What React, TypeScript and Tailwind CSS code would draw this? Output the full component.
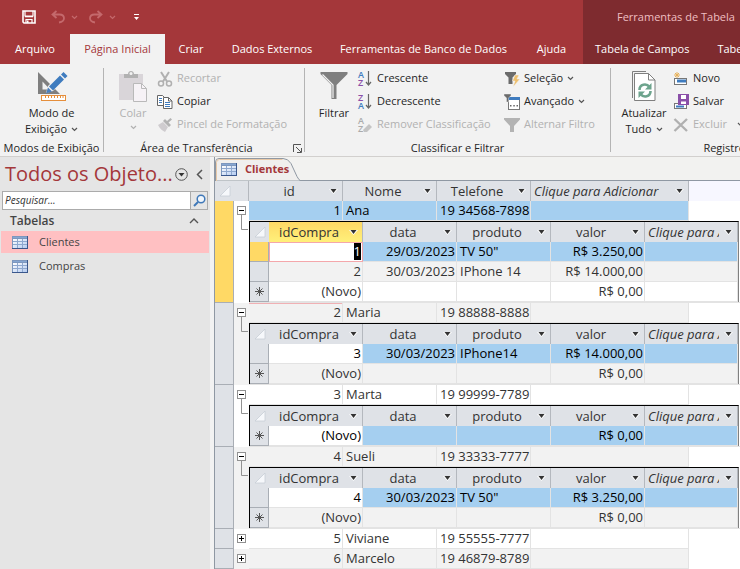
import type { ReactNode } from "react";

const ui = "font-['Open_Sans','Noto_Sans',sans-serif]";

/* ---------- small glyphs ---------- */

function Chevron({ className = "" }: { className?: string }) {
  return (
    <svg width="7" height="5" viewBox="0 0 7 5" className={`inline-block shrink-0 ${className}`} aria-hidden="true">
      <path d="M1 1l2.5 2.5L6 1" fill="none" stroke="currentColor" strokeWidth="1.2" />
    </svg>
  );
}

function SaveIcon() {
  return (
    <svg width="14" height="14" viewBox="0 0 14 14" fill="none" aria-hidden="true">
      <path d="M1 1h12v12H2l-1-1z" stroke="#fff" strokeWidth="1.6" />
      <path d="M3 1v5h8V1M3 6.6h8M4 13V9.5h6V13" stroke="#fff" strokeWidth="1.2" />
      <path d="M5 10.5h1.5V13H5z" fill="#fff" />
    </svg>
  );
}

function UndoIcon({ flip = false }: { flip?: boolean }) {
  return (
    <svg width="14" height="14" viewBox="0 0 14 14" fill="none" aria-hidden="true" className={flip ? "-scale-x-100" : ""}>
      <path d="M5.5 1L1.5 4.5l4 3.5M2 4.5h6.5c3 0 4.5 1.5 4.5 3.800 0 2.500-2 3.700-5 4.200" stroke="#c4696c" strokeWidth="1.8" />
    </svg>
  );
}

function TableIcon() {
  return (
    <svg width="16" height="13" viewBox="0 0 16 13" aria-hidden="true" className="shrink-0">
      <defs>
        <linearGradient id="cells" x1="0" y1="0" x2="1" y2="1">
          <stop offset="0" stopColor="#ffffff" />
          <stop offset="1" stopColor="#b4cbf0" />
        </linearGradient>
      </defs>
      <rect width="16" height="13" fill="#7d97bd" />
      <rect x="1" y="3" width="14" height="9" fill="url(#cells)" />
      <path d="M1 1.500h14" stroke="#86a6d2" />
      <path d="M1 5.500h14M1 8.500h14M5.500 3v9M10.500 3v9" stroke="#8ea8cf" />
      <path d="M0 12.500h16M15.500 0v13" stroke="#3a578c" />
    </svg>
  );
}

function DesignIcon() {
  return (
    <svg width="32" height="32" viewBox="0 0 32 32" aria-hidden="true">
      <path d="M2 2v22h22zM6.500 11.500L14 19.500H6.500z" fill="#7f7f7f" fillRule="evenodd" />
      <path d="M10 23l2-7L25 3l5 5-13 13z" fill="#f2f2f2" />
      <path d="M10 23.500l2-6 4 4z" fill="#4a7fbd" />
      <path d="M13 16.500l4 4L28 9.500l-4-4zM25 4.500l4 4 2.500-2.500-4-4z" fill="#3f7cbf" />
      <rect x="5.500" y="25.500" width="24" height="5" fill="#fff" stroke="#e58e3b" />
      <path d="M9.500 26v2M12.500 26v2M15.500 26v2M18.500 26v2M21.500 26v2M24.500 26v2M27 26v2" stroke="#e58e3b" />
    </svg>
  );
}

function PasteIcon() {
  return (
    <svg width="30" height="32" viewBox="0 0 30 32" aria-hidden="true">
      <path d="M1 4h24v26H1z" fill="#d9d5d9" />
      <path d="M6 4h4c0-4 6-4 6 0h4v4H6z" fill="#b1b1b1" />
      <circle cx="13" cy="3.500" r="1.500" fill="#f2f2f2" />
      <path d="M15.500 13.500h8l5 5v13h-13z" fill="#f6f2f6" stroke="#b9b9b9" />
      <path d="M23.500 13.500v5h5" fill="none" stroke="#b9b9b9" />
    </svg>
  );
}

function CutIcon() {
  return (
    <svg width="16" height="16" viewBox="0 0 16 16" fill="none" aria-hidden="true">
      <path d="M4 1l6 9.500M12 1L6 10.500" stroke="#b0b0b0" strokeWidth="2" />
      <circle cx="4" cy="12.500" r="2.500" stroke="#b0b0b0" strokeWidth="1.500" />
      <circle cx="12" cy="12.500" r="2.500" stroke="#b0b0b0" strokeWidth="1.500" />
    </svg>
  );
}

function CopyIcon() {
  return (
    <svg width="16" height="16" viewBox="0 0 16 16" fill="#fff" aria-hidden="true">
      <path d="M.5 1.500h5l2 2v8h-7z" stroke="#666" />
      <path d="M2 4.500h3M2 6.500h3M2 8.500h3" stroke="#3f7cbf" />
      <path d="M6.500 3.500h5l3.500 3.500v7.500H6.500z" stroke="#666" />
      <path d="M11.500 3.500V7H15" fill="none" stroke="#666" />
      <path d="M8 8.500h5M8 10.500h5M8 12.500h5" stroke="#3f7cbf" />
    </svg>
  );
}

function BrushIcon() {
  return (
    <svg width="16" height="16" viewBox="0 0 16 16" aria-hidden="true">
      <path d="M1 8l5-3 5 5-3 5c-2-1-5-3-7-7z" fill="#cfcccf" />
      <path d="M6 4l6 6 2-2-2.500-2.500L15 2.500 13.500 1 10 4 8 2z" fill="#b3b3b3" />
    </svg>
  );
}

function FunnelIcon() {
  return (
    <svg width="28" height="30" viewBox="0 0 28 30" aria-hidden="true">
      <path d="M.5 1h27v2L16.500 14v14h-5V14L.5 3z" fill="#7f7f7f" />
      <path d="M2.500 3.500L13 14v13" fill="none" stroke="#f2f2f2" strokeWidth="1.200" />
    </svg>
  );
}

function SortIcon({ top, bottom, clear = false }: { top: string; bottom: string; clear?: boolean }) {
  const colour = (letter: string) => (clear ? "#ababab" : letter === "A" ? "#3f7cbf" : "#8a4fa8");
  return (
    <svg width="16" height="18" viewBox="0 0 16 18" aria-hidden="true" fontSize="9" fontWeight="600" fontFamily="Open Sans, sans-serif">
      <text x="1" y="8" fill={colour(top)}>{top}</text>
      <text x="1" y="16" fill={colour(bottom)}>{bottom}</text>
      {clear ? (
        <path d="M6 14l6-6 3 3-5 5H7z" fill="#c4c4c4" />
      ) : (
        <path d="M11.500 1v14M9 12l2.500 3 2.500-3" fill="none" stroke="#666" strokeWidth="1.200" />
      )}
    </svg>
  );
}

function SelectionIcon() {
  return (
    <svg width="16" height="16" viewBox="0 0 16 16" aria-hidden="true">
      <path d="M1 1h11v2L8.500 6.500V13h-4V6.500L1 3z" fill="#6b6b6b" />
      <path d="M11 4h4l-2 4h3l-7 8 2-6H8.500z" fill="#eebf6d" stroke="#f2f2f2" strokeWidth=".5" />
    </svg>
  );
}

function AdvancedIcon() {
  return (
    <svg width="16" height="16" viewBox="0 0 16 16" aria-hidden="true">
      <rect x="4.500" y="4.500" width="11" height="11" fill="#fff" stroke="#777" />
      <path d="M4 3h12v3H4z" fill="#3f7cbf" />
      <path d="M6 11h1.500v1.500H6zM9.300 11h1.500v1.500H9.300zM12.500 11H14v1.500h-1.500z" fill="#666" />
      <path d="M0 0h7v1.500L4.500 4v4h-2V4L0 1.500z" fill="#6b6b6b" stroke="#f2f2f2" strokeWidth=".4" />
    </svg>
  );
}

function ToggleFilterIcon() {
  return (
    <svg width="16" height="16" viewBox="0 0 16 16" aria-hidden="true">
      <path d="M0 1h16v1.500L10 9v6H6V9L0 2.500z" fill="#b3b3b3" />
    </svg>
  );
}

function RefreshIcon() {
  return (
    <svg width="26" height="32" viewBox="0 0 26 32" fill="none" aria-hidden="true">
      <path d="M1.500 28V1.500H15" stroke="#7f7f7f" />
      <path d="M3.500 3.500h14l6.500 6.500v20.500H3.500z" fill="#fff" stroke="#7f7f7f" />
      <path d="M17.500 3.500V10H24" stroke="#7f7f7f" />
      <path d="M8.500 20c0-6 7-7 10-3M19.500 21c0 6-7 7-10 3" stroke="#6da48d" strokeWidth="2.600" />
      <path d="M20.500 13v6.500H14zM7.500 28v-6.500H14z" fill="#6da48d" />
    </svg>
  );
}

function NewRecordIcon() {
  return (
    <svg width="16" height="16" viewBox="0 0 16 16" aria-hidden="true">
      <rect x="1.500" y="7.500" width="12" height="6" fill="#fff" stroke="#777" />
      <path d="M4 8.500h9v3H4z" fill="#3f7cbf" />
      <path d="M4 1v6M1 4h6M2 2l4 4M6 2L2 6" stroke="#e8b25a" />
    </svg>
  );
}

function SaveRecordIcon() {
  return (
    <svg width="16" height="16" viewBox="0 0 16 16" aria-hidden="true">
      <rect x="1.500" y="9.500" width="12" height="5" fill="#fff" stroke="#777" />
      <path d="M3 11.500h8v2H3z" fill="#3f7cbf" />
      <path d="M5 0h11v11H5z" fill="#8a4fa8" />
      <path d="M8 1h5v4H8zM8 7.500h5V10H8z" fill="#fff" />
    </svg>
  );
}

function DeleteIcon() {
  return (
    <svg width="16" height="16" viewBox="0 0 16 16" aria-hidden="true">
      <path d="M1.500 2L14 14M14 2L1.500 14" stroke="#b0b0b0" strokeWidth="2.400" />
    </svg>
  );
}

/* ---------- ribbon ---------- */

function SmallButton({ icon, label, menu, disabled }: { icon: ReactNode; label: string; menu?: boolean; disabled?: boolean }) {
  return (
    <button
      type="button"
      disabled={disabled}
      className="flex h-[23px] items-center gap-1 whitespace-nowrap text-[#262626] disabled:text-[#b1b1b1]"
    >
      <span className="flex w-4 shrink-0 justify-center">{icon}</span>
      <span>{label}</span>
      {menu && <Chevron className="text-[#555]" />}
    </button>
  );
}

function LargeButton({ icon, lines, menu, disabled, className }: { icon: ReactNode; lines: string[]; menu?: boolean; disabled?: boolean; className: string }) {
  return (
    <button type="button" disabled={disabled} className={`flex flex-col items-center leading-4 text-[#262626] disabled:text-[#b1b1b1] ${className}`}>
      <span className="flex h-[38px] items-center">{icon}</span>
      {lines.map((line, i) => (
        <span key={line} className="flex items-center gap-1 whitespace-nowrap">
          {line}
          {menu && i === lines.length - 1 && i > 0 && <Chevron className="text-[#555]" />}
        </span>
      ))}
      {menu && lines.length === 1 && <Chevron className="mt-1" />}
    </button>
  );
}

function Group({ label, className, launcher, children }: { label: string; className: string; launcher?: boolean; children: ReactNode }) {
  return (
    <section className={`flex shrink-0 flex-col pt-[3px] ${className}`}>
      <div className="flex h-[73px] items-start">{children}</div>
      <div className="flex h-4 items-center">
        <h2 className="flex-1 text-center leading-4 whitespace-nowrap">{label}</h2>
        {launcher && (
          <button type="button" aria-label="Mais opções" className="mr-[2px] ml-1">
            <svg width="9" height="9" viewBox="0 0 9 9" fill="none" stroke="#555" aria-hidden="true">
              <path d="M.5 8V.5H8M3 3l5 5M8.500 4v4.500H4" />
            </svg>
          </button>
        )}
      </div>
    </section>
  );
}

function Separator() {
  return <div className="mt-1 h-[84px] w-px shrink-0 bg-[#b4b4b4]" />;
}

const tabs = [
  { label: "Arquivo", width: "w-[70px]" },
  { label: "Página Inicial", width: "w-[95px]" },
  { label: "Criar", width: "w-[52px]" },
  { label: "Dados Externos", width: "w-[110px]" },
  { label: "Ferramentas de Banco de Dados", width: "w-[193px]" },
  { label: "Ajuda", width: "w-[63px]" },
];

function TitleBar() {
  return (
    <header className="flex overflow-hidden bg-[#a4373a] text-white">
      <div className="shrink-0">
        <div className="flex h-[34px] items-center pl-[22px]">
          <button type="button" aria-label="Salvar"><SaveIcon /></button>
          <button type="button" aria-label="Desfazer" className="ml-[15px]"><UndoIcon /></button>
          <Chevron className="ml-[6px] text-[#c4696c]" />
          <button type="button" aria-label="Refazer" className="ml-[11px]"><UndoIcon flip /></button>
          <Chevron className="ml-[6px] text-[#c4696c]" />
          <button type="button" aria-label="Personalizar" className="ml-[17px]">
            <svg width="7" height="6" viewBox="0 0 7 6" fill="#fff" aria-hidden="true">
              <path d="M1 0h5v1H1zM1 3h5L3.500 6z" />
            </svg>
          </button>
        </div>
        <nav className="flex h-[30px]">
          {tabs.map((tab) => (
            <button
              key={tab.label}
              type="button"
              className={`shrink-0 whitespace-nowrap ${tab.width} ${tab.label === "Página Inicial" ? "bg-[#f2f2f2] text-[#a4373a]" : ""}`}
            >
              {tab.label}
            </button>
          ))}
        </nav>
      </div>
      <div className="min-w-0 flex-1 bg-[#7e2b2f]">
        <div className="flex h-[34px] items-center pl-[34px] whitespace-nowrap text-[#efbfc1]">Ferramentas de Tabela</div>
        <nav className="flex h-[30px] gap-7 pl-3 whitespace-nowrap">
          <button type="button">Tabela de Campos</button>
          <button type="button">Tabela</button>
        </nav>
      </div>
    </header>
  );
}

function Ribbon() {
  return (
    <div className="flex overflow-hidden border-b border-[#d2d0ce] bg-[#f2f2f2] text-[#262626]">
      <Group label="Modos de Exibição" className="w-[103px]">
        <LargeButton icon={<DesignIcon />} lines={["Modo de", "Exibição"]} menu className="mx-auto" />
      </Group>
      <Separator />
      <Group label="Área de Transferência" className="w-[200px]" launcher>
        <LargeButton icon={<PasteIcon />} lines={["Colar"]} menu disabled className="ml-3 w-[34px]" />
        <div className="ml-[7px]">
          <SmallButton icon={<CutIcon />} label="Recortar" disabled />
          <SmallButton icon={<CopyIcon />} label="Copiar" />
          <SmallButton icon={<BrushIcon />} label="Pincel de Formatação" disabled />
        </div>
      </Group>
      <Separator />
      <Group label="Classificar e Filtrar" className="w-[305px]">
        <LargeButton icon={<FunnelIcon />} lines={["Filtrar"]} className="ml-3 w-[34px]" />
        <div className="ml-[6px] w-[147px]">
          <SmallButton icon={<SortIcon top="A" bottom="Z" />} label="Crescente" />
          <SmallButton icon={<SortIcon top="Z" bottom="A" />} label="Decrescente" />
          <SmallButton icon={<SortIcon top="A" bottom="Z" clear />} label="Remover Classificação" disabled />
        </div>
        <div>
          <SmallButton icon={<SelectionIcon />} label="Seleção" menu />
          <SmallButton icon={<AdvancedIcon />} label="Avançado" menu />
          <SmallButton icon={<ToggleFilterIcon />} label="Alternar Filtro" disabled />
        </div>
      </Group>
      <Separator />
      <Group label="Registros" className="w-[232px]">
        <LargeButton icon={<RefreshIcon />} lines={["Atualizar", "Tudo"]} menu className="ml-2 w-[50px]" />
        <div className="ml-1">
          <SmallButton icon={<NewRecordIcon />} label="Novo" />
          <SmallButton icon={<SaveRecordIcon />} label="Salvar" />
          <div className="flex items-center gap-[10px]">
            <SmallButton icon={<DeleteIcon />} label="Excluir" disabled />
            <Chevron className="text-[#555]" />
          </div>
        </div>
      </Group>
    </div>
  );
}

/* ---------- navigation pane ---------- */

function NavigationPane() {
  return (
    <aside className="w-[210px] shrink-0 bg-[#e5e5e5] text-[#444]">
      <div className="flex h-[34px] items-center pl-[5px]">
        <h1 className="w-[170px] text-[20px] whitespace-nowrap text-[#a4373a]">Todos os Objeto...</h1>
        <button type="button" aria-label="Filtrar objetos">
          <svg width="13" height="13" viewBox="0 0 13 13" aria-hidden="true">
            <circle cx="6.500" cy="6.500" r="5.800" fill="none" stroke="#555" />
            <path d="M3.500 5h6l-3 3.500z" fill="#333" />
          </svg>
        </button>
        <button type="button" aria-label="Recolher painel" className="ml-2">
          <svg width="7" height="11" viewBox="0 0 7 11" fill="none" stroke="#555" strokeWidth="1.500" aria-hidden="true">
            <path d="M6 1L1.500 5.500 6 10" />
          </svg>
        </button>
      </div>
      <div className="mr-[2px] ml-[2px] flex h-[19px] border border-[#ababab] bg-white">
        <input
          type="text"
          aria-label="Pesquisar"
          placeholder="Pesquisar..."
          className="w-0 flex-1 px-[2px] text-[10px] italic placeholder:text-[#333]"
        />
        <button type="button" aria-label="Buscar" className="flex w-[17px] items-center justify-center border-l border-[#ababab] bg-[#e5e5e5]">
          <svg width="13" height="13" viewBox="0 0 13 13" fill="none" stroke="#3f78b8" aria-hidden="true">
            <circle cx="8" cy="5" r="3.800" strokeWidth="1.500" fill="#f0f6fc" />
            <path d="M5 8l-4 4" strokeWidth="2" />
          </svg>
        </button>
      </div>
      <button type="button" className="flex h-[21px] w-full items-center justify-between pr-[11px] pl-[10px] text-[12px] font-semibold">
        Tabelas
        <svg width="10" height="6" viewBox="0 0 10 6" fill="none" stroke="#555" strokeWidth="1.400" aria-hidden="true">
          <path d="M1 5l4-4 4 4" />
        </svg>
      </button>
      <ul>
        <li>
          <button type="button" className="ml-px flex h-[22px] w-[208px] items-center gap-[11px] bg-[#ffc0c2] pl-[11px]">
            <TableIcon />
            Clientes
          </button>
        </li>
        <li>
          <button type="button" className="ml-px flex h-[26px] w-[208px] items-center gap-[11px] pl-[11px]">
            <TableIcon />
            Compras
          </button>
        </li>
      </ul>
    </aside>
  );
}

/* ---------- datasheet ---------- */

type Purchase = { id: string; date: string; product: string; value: string };
type Client = { id: number; name: string; phone: string; purchases?: Purchase[] };

const clients: Client[] = [
  {
    id: 1,
    name: "Ana",
    phone: "19 34568-7898",
    purchases: [
      { id: "1", date: "29/03/2023", product: 'TV 50"', value: "R$ 3.250,00" },
      { id: "2", date: "30/03/2023", product: "IPhone 14", value: "R$ 14.000,00" },
    ],
  },
  { id: 2, name: "Maria", phone: "19 88888-8888", purchases: [{ id: "3", date: "30/03/2023", product: "IPhone14", value: "R$ 14.000,00" }] },
  { id: 3, name: "Marta", phone: "19 99999-7789", purchases: [] },
  { id: 4, name: "Sueli", phone: "19 33333-7777", purchases: [{ id: "4", date: "30/03/2023", product: 'TV 50"', value: "R$ 3.250,00" }] },
  { id: 5, name: "Viviane", phone: "19 55555-7777" },
  { id: 6, name: "Marcelo", phone: "19 46879-8789" },
];

function SelectAll() {
  return (
    <svg width="12" height="12" viewBox="0 0 12 12" className="ml-1" aria-hidden="true">
      <path d="M11 1v10H1z" fill="#f6f8fb" stroke="#c3cad3" strokeWidth=".7" />
    </svg>
  );
}

function HeaderCell({ label, italic, active }: { label: string; italic?: boolean; active?: boolean }) {
  return (
    <th scope="col" className={`h-5 border-r border-[#b4b8be] p-0 font-normal ${active ? "bg-linear-to-b from-[#ffd965] to-[#fff07a]" : "bg-[#dfe2e7]"}`}>
      <div className="flex h-5 items-center pr-1">
        <span className={`min-w-0 flex-1 overflow-hidden whitespace-nowrap ${italic ? "mr-[5px] ml-[3px] text-left italic" : "text-center"}`}>{label}</span>
        <svg width="9" height="5" viewBox="0 0 9 5" className="shrink-0" aria-hidden="true">
          <path d="M0 0h9L4.500 5z" fill="#fff" />
          <path d="M1.500 0h6l-3 4z" fill="#333" />
        </svg>
      </div>
    </th>
  );
}

function Expander({ open }: { open: boolean }) {
  return (
    <button type="button" aria-label={open ? "Recolher" : "Expandir"} className="block">
      <svg width="15" height={open ? 30 : 19} viewBox={open ? "0 0 15 30" : "0 0 15 19"} fill="none" stroke="#919191" aria-hidden="true">
        {open && <path d="M7.500 14v14.500H14" />}
        <rect x="3.500" y="5.500" width="8" height="8" fill="#fff" />
        <path d={open ? "M5 9.500h5" : "M5 9.500h5M7.500 7v5"} stroke="#000" />
      </svg>
    </button>
  );
}

function PurchaseTable({ purchases, first }: { purchases: Purchase[]; first: boolean }) {
  const cell = "h-5 overflow-hidden border-r border-b border-[#e3e3e3] py-0 pr-px pl-[3px] whitespace-nowrap";
  const selector = "h-5 border-r border-b border-[#a9aeb5] p-0";
  const current = "bg-[#a5cff0] text-black";
  const newIsCurrent = purchases.length === 0;
  const newFill = newIsCurrent ? current : first ? "bg-white" : "bg-[#f2f2f2]";
  return (
    <table className="w-[490px] table-fixed border-separate border-spacing-0 border-t border-r border-l border-t-black border-r-[#808080] border-l-black bg-white">
      <colgroup>
        <col className="w-[19px]" />
        <col className="w-[94px]" />
        <col className="w-[94px]" />
        <col className="w-[94px]" />
        <col className="w-[94px]" />
        <col />
      </colgroup>
      <thead>
        <tr>
          <td className="bg-[#dfe2e7] p-0"><SelectAll /></td>
          <HeaderCell label="idCompra" active={first} />
          <HeaderCell label="data" />
          <HeaderCell label="produto" />
          <HeaderCell label="valor" />
          <HeaderCell label="Clique para Adicionar" italic />
        </tr>
      </thead>
      <tbody>
        {purchases.map((p, i) => {
          const fill = i === 0 ? current : "bg-[#f2f2f2]";
          const selected = first && i === 0;
          return (
            <tr key={p.id}>
              <td className={`${selector} ${selected ? "bg-[#ffd965]" : "bg-[#dfe2e7]"}`} />
              <td className={`${cell} text-right ${i === 0 ? "bg-white text-black" : fill} ${selected ? "outline-1 -outline-offset-1 outline-[#f4a7ab]" : ""}`}>
                {selected ? <span className="inline-block h-[18px] bg-black align-top leading-[18px] text-white">{p.id}</span> : p.id}
              </td>
              <td className={`${cell} text-right ${fill}`}>{p.date}</td>
              <td className={`${cell} ${fill}`}>{p.product}</td>
              <td className={`${cell} text-right ${fill}`}>{p.value}</td>
              <td className={`${cell} ${fill}`} />
            </tr>
          );
        })}
        <tr>
          <td className={`${selector} bg-[#dfe2e7]`}>
            <svg width="11" height="11" viewBox="0 0 11 11" stroke="#555" className="mx-auto" aria-hidden="true">
              <path d="M5.500 1v9M1 5.500h9M2.500 2.500l6 6M8.500 2.500l-6 6" />
            </svg>
          </td>
          <td className={`${cell} text-right ${newIsCurrent ? "bg-white text-black" : newFill}`}>(Novo)</td>
          <td className={`${cell} ${newFill}`} />
          <td className={`${cell} ${newFill}`} />
          <td className={`${cell} text-right ${newFill}`}>R$ 0,00</td>
          <td className={`${cell} ${newFill}`} />
        </tr>
      </tbody>
    </table>
  );
}

function ClientRows({ client }: { client: Client }) {
  const active = client.id === 1;
  const stripe = client.id % 2 === 0 ? "bg-[#f2f2f2]" : "bg-white";
  const fill = active ? "bg-[#a5cff0] text-black" : stripe;
  const cell = `h-5 border-r border-b border-[#e3e3e3] py-0 pr-px pl-[3px] whitespace-nowrap ${fill}`;
  const open = client.purchases !== undefined;
  const span = open ? 2 : 1;
  return (
    <>
      <tr>
        <td rowSpan={span} className={`border-r border-b border-[#a9aeb5] p-0 ${active ? "bg-[#ffd965]" : "bg-[#dfe2e7]"}`} />
        <td rowSpan={span} className={`p-0 align-top ${stripe}`}><Expander open={open} /></td>
        <td className={`${cell} text-right ${client.id === 2 ? "shadow-[inset_0_1px_#f0b0b4]" : ""}`}>{client.id}</td>
        <td className={cell}>{client.name}</td>
        <td className={cell}>{client.phone}</td>
        <td className={cell} />
        <td className="p-0" />
      </tr>
      {client.purchases && (
        <tr>
          <td colSpan={5} className="border-b border-[#e3e3e3] p-0">
            <PurchaseTable purchases={client.purchases} first={active} />
          </td>
        </tr>
      )}
    </>
  );
}

function Datasheet() {
  return (
    <main className="min-w-0 flex-1 overflow-hidden border-l border-[#8f98a3] bg-white">
      <div className="h-[24px] border-b border-[#8f98a3] bg-[#f2f2f0]">
        <button type="button" className="relative flex h-6 w-[86px] items-center gap-2 pl-[6px] font-bold text-[#a4373a]">
          <svg width="86" height="24" viewBox="0 0 86 24" className="absolute top-0 left-0" aria-hidden="true">
            <path d="M.5 24V5Q.5 1.500 4 1.500h64q5 0 8 5l6 13q2 4 4 4.500z" fill="#f0efee" stroke="#8f98a3" />
            <path d="M1.500 24V5.500q0-3 3-3h63" fill="none" stroke="#e8c9a8" />
          </svg>
          <span className="relative"><TableIcon /></span>
          <span className="relative">Clientes</span>
        </button>
      </div>
      <table className="w-full min-w-[525px] table-fixed border-separate border-spacing-0 text-[13px] leading-[19px] text-[#333]">
        <colgroup>
          <col className="w-[19px]" />
          <col className="w-[15px]" />
          <col className="w-[94px]" />
          <col className="w-[94px]" />
          <col className="w-[94px]" />
          <col className="w-[158px]" />
          <col />
        </colgroup>
        <thead>
          <tr>
            <td className="bg-[#dfe2e7] p-0"><SelectAll /></td>
            <td className="border-r border-[#b4b8be] bg-[#dfe2e7] p-0" />
            <HeaderCell label="id" />
            <HeaderCell label="Nome" />
            <HeaderCell label="Telefone" />
            <HeaderCell label="Clique para Adicionar" italic />
            <td className="bg-[#f7f7ff] p-0" />
          </tr>
        </thead>
        <tbody>
          {clients.map((client) => (
            <ClientRows key={client.id} client={client} />
          ))}
        </tbody>
      </table>
    </main>
  );
}

export default function App() {
  return (
    <div className={`flex h-screen flex-col overflow-hidden bg-[#f2f2f2] text-[11px] ${ui}`}>
      <TitleBar />
      <Ribbon />
      <div className="flex min-h-0 flex-1 gap-1">
        <NavigationPane />
        <Datasheet />
      </div>
    </div>
  );
}
